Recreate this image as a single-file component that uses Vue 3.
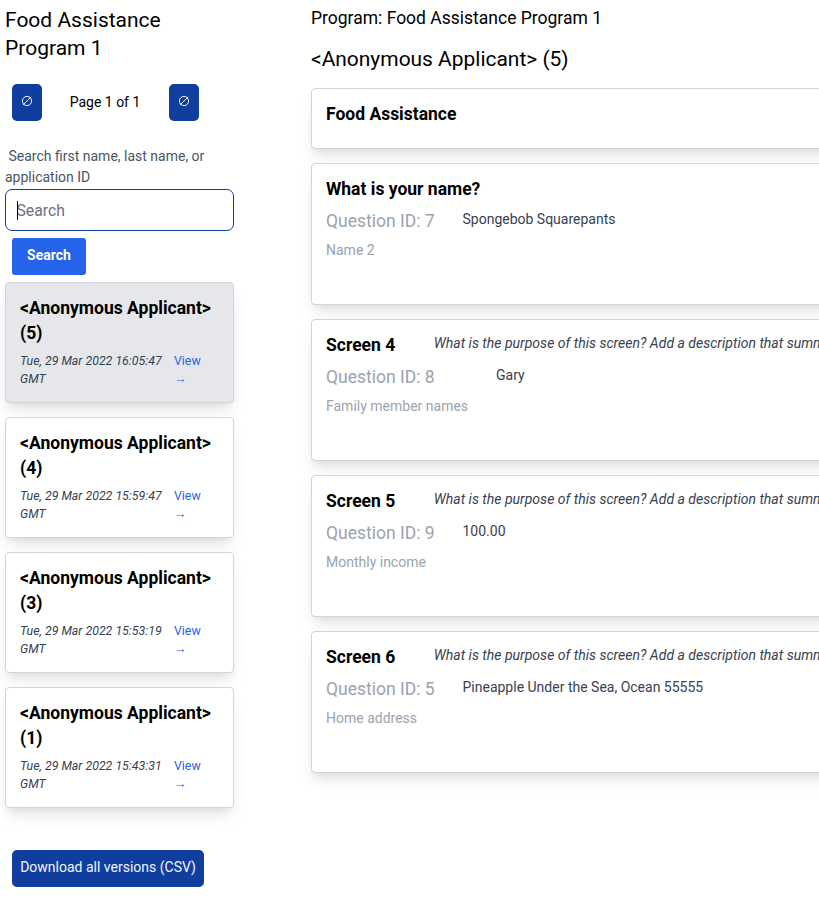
<script setup>
const applications = [
  { id: 5, time: 'Tue, 29 Mar 2022 16:05:47 GMT', selected: true },
  { id: 4, time: 'Tue, 29 Mar 2022 15:59:47 GMT' },
  { id: 3, time: 'Tue, 29 Mar 2022 15:53:19 GMT' },
  { id: 1, time: 'Tue, 29 Mar 2022 15:43:31 GMT' },
]

const hint = 'What is the purpose of this screen? Add a description that summarizes'

const blocks = [
  { title: 'What is your name?', question: 7, name: 'Name 2', answer: 'Spongebob Squarepants' },
  { title: 'Screen 4', hint, question: 8, name: 'Family member names', answer: 'Gary', wide: true },
  { title: 'Screen 5', hint, question: 9, name: 'Monthly income', answer: '100.00' },
  { title: 'Screen 6', hint, question: 5, name: 'Home address', answer: 'Pineapple Under the Sea, Ocean 55555' },
]
</script>

<template>
  <div class="page">
    <aside class="sidebar">
      <h1 class="program-title">Food Assistance Program 1</h1>

      <nav class="pager">
        <button class="button primary page-button">
          <svg class="empty-icon" viewBox="0 0 12 12"><circle cx="6" cy="6" r="4.6" /><path d="M2 10 10.2 1.8" /></svg>
        </button>
        <span class="page-label">Page 1 of 1</span>
        <button class="button primary page-button">
          <svg class="empty-icon" viewBox="0 0 12 12"><circle cx="6" cy="6" r="4.6" /><path d="M2 10 10.2 1.8" /></svg>
        </button>
      </nav>

      <form class="search" @submit.prevent>
        <label class="search-label" for="search">Search first name, last name, or application ID</label>
        <div class="search-box">
          <input id="search" class="search-input" type="text" placeholder="Search" />
          <span class="caret"></span>
        </div>
        <button class="button search-button">Search</button>
      </form>

      <div class="applications">
        <article
          v-for="app in applications"
          :key="app.id"
          class="card application"
          :class="{ selected: app.selected }"
        >
          <h2 class="applicant">&lt;Anonymous Applicant&gt; ({{ app.id }})</h2>
          <div class="meta">
            <span class="time">{{ app.time }}</span>
            <a class="view">View →</a>
          </div>
        </article>
      </div>

      <button class="button primary download">Download all versions (CSV)</button>
    </aside>

    <main class="detail">
      <div class="program">Program: Food Assistance Program 1</div>
      <h1 class="detail-title">&lt;Anonymous Applicant&gt; (5)</h1>

      <section class="card program-card">
        <h2 class="block-title">Food Assistance</h2>
      </section>

      <section v-for="block in blocks" :key="block.title" class="card block">
        <div class="block-head">
          <h2 class="block-title">{{ block.title }}</h2>
          <p v-if="block.hint" class="hint">{{ block.hint }}</p>
        </div>
        <div class="answer-row">
          <div class="question">Question ID: {{ block.question }}</div>
          <div class="answer" :class="{ wide: block.wide }">{{ block.answer }}</div>
        </div>
        <div class="question-name">{{ block.name }}</div>
      </section>
    </main>
  </div>
</template>

<style>
body {
  margin: 0;
  background: #fff;
  overflow: hidden;
}
</style>

<style scoped>
.page {
  display: flex;
  gap: 77px;
  box-sizing: border-box;
  width: 819px;
  height: 903px;
  padding-left: 5px;
  overflow: hidden;
  color: #000;
  font-family: Roboto, "Liberation Sans", sans-serif;
  font-size: 14px;
  line-height: 21px;
}

h1,
h2,
p {
  margin: 0;
  font-weight: 400;
}

.sidebar {
  display: flex;
  flex-direction: column;
  align-items: flex-start;
  flex: none;
  width: 229px;
  padding-top: 6px;
}

.program-title {
  width: 200px;
  font-size: 21px;
  line-height: 28px;
}

.button {
  box-sizing: border-box;
  height: 37px;
  padding: 0 0 3px;
  border: 0;
  border-radius: 5px;
  color: #fff;
  font: inherit;
}

.primary {
  background: #103e9f;
  color: #eff6ff;
}

.pager {
  display: flex;
  align-items: center;
  margin: 22px 0 0 7px;
}

.page-button {
  display: flex;
  align-items: center;
  justify-content: center;
  width: 30px;
}

.empty-icon {
  width: 12px;
  height: 12px;
  fill: none;
  stroke: currentColor;
  stroke-width: 1;
}

.page-label {
  box-sizing: border-box;
  width: 127px;
  padding-right: 1px;
  text-align: center;
}

.search {
  display: flex;
  flex-direction: column;
  align-items: flex-start;
  width: 229px;
  margin-top: 25px;
}

.search-label {
  color: #4b5563;
  text-indent: 3.5px;
}

.search-box {
  position: relative;
  width: 229px;
  height: 42px;
  margin-top: 1px;
}

.search-input {
  box-sizing: border-box;
  width: 100%;
  height: 100%;
  padding: 0 10.5px;
  border: 1px solid #103e9f;
  border-radius: 7px;
  outline: 0;
  font: inherit;
  font-size: 15.75px;
}

.search-input::placeholder {
  color: #6b7280;
  opacity: 1;
}

.caret {
  position: absolute;
  top: 12px;
  left: 12px;
  width: 1px;
  height: 19px;
  background: #000;
}

.search-button {
  width: 74px;
  margin: 7px 0 0 7px;
  border-radius: 3px;
  background: #2563eb;
  font-weight: 700;
}

.card {
  box-sizing: border-box;
  border: 1px solid #d1d5db;
  border-radius: 4px;
  background: #fff;
  box-shadow: 0 10px 15px -3px rgba(0, 0, 0, 0.1), 0 4px 6px -2px rgba(0, 0, 0, 0.05);
}

.applications {
  display: flex;
  flex-direction: column;
  gap: 14px;
  margin-top: 7px;
}

.application {
  width: 229px;
  height: 121px;
  padding: 13px 14px;
}

.selected {
  background: #e5e7eb;
}

.applicant {
  font-size: 17.55px;
  font-weight: 700;
  line-height: 25px;
}

.meta {
  display: flex;
  margin-top: 6px;
  font-size: 12.35px;
  line-height: 18px;
}

.time {
  width: 154px;
  padding-right: 8px;
  box-sizing: border-box;
  color: #374151;
  font-style: italic;
}

.view {
  width: 30px;
  color: #2563eb;
}

.download {
  width: 192px;
  margin: 42px 0 0 7px;
}

.detail {
  flex: none;
  width: 900px;
  padding-top: 6px;
}

.program {
  font-size: 17.5px;
  line-height: 25px;
}

.detail-title {
  margin-top: 14px;
  font-size: 20.95px;
  line-height: 28px;
}

.program-card {
  height: 61px;
  margin-top: 15px;
  padding: 13px 14px;
}

.block {
  height: 142px;
  margin-top: 14px;
  padding: 13px 14px;
}

.block-head {
  display: flex;
  gap: 38.5px;
}

.block-title {
  font-size: 17.5px;
  font-weight: 700;
  line-height: 25px;
}

.hint {
  color: #374151;
  font-style: italic;
  letter-spacing: 0.01px;
  white-space: nowrap;
}

.answer-row {
  display: flex;
  margin-top: 7px;
}

.question {
  width: 136.5px;
  color: #9ca3af;
  font-size: 17.5px;
  line-height: 25px;
}

.answer {
  color: #374151;
}

.wide {
  padding-left: 33.5px;
}

.question-name {
  margin-top: 6px;
  color: #9ca3af;
}
</style>
